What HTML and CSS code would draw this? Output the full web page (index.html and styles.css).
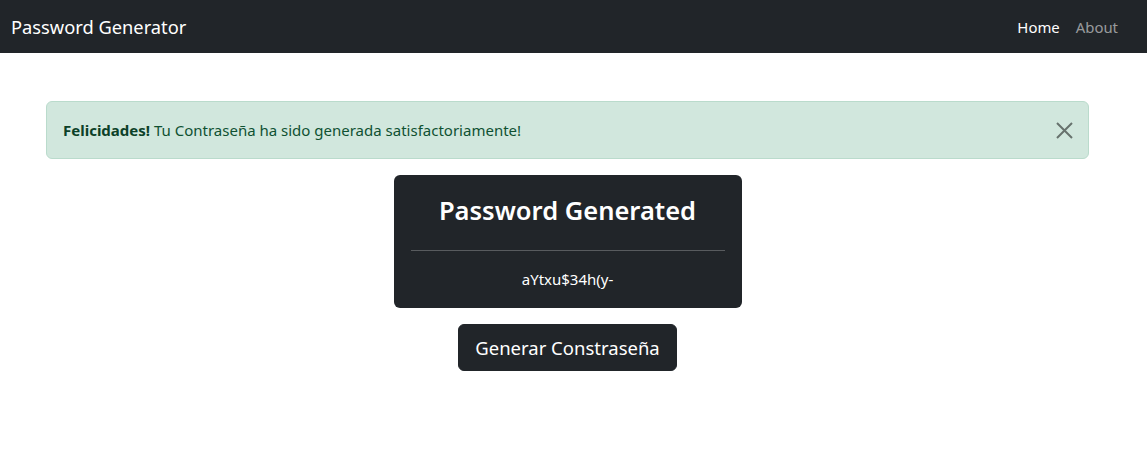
FILE: index.html
```html
<!DOCTYPE html>
<html lang="es">
<head>
<meta charset="utf-8">
<title>Password Generator</title>
<link rel="stylesheet" href="styles.css">
</head>
<body>
<nav class="navbar">
  <a class="brand" href="#">Password Generator</a>
  <ul class="nav">
    <li><a class="nav-link active" href="#">Home</a></li>
    <li><a class="nav-link" href="#">About</a></li>
  </ul>
</nav>
<main class="main">
  <div class="alert">
    <span><strong>Felicidades!</strong> Tu Contraseña ha sido generada satisfactoriamente!</span>
    <button class="btn-close" type="button" aria-label="Close">
      <svg width="17" height="17" viewBox="0 0 17 17"><path d="M1 1 L16 16 M16 1 L1 16" stroke="#000" stroke-width="2" fill="none"/></svg>
    </button>
  </div>
  <div class="card">
    <h2 class="card-title">Password Generated</h2>
    <hr class="divider">
    <p class="password">aYtxu$34h(y-</p>
  </div>
  <button class="btn-generate" type="button">Generar Constraseña</button>
</main>
</body>
</html>
```
FILE: styles.css
```css
* { box-sizing: border-box; }
html, body { margin: 0; padding: 0; }
body {
  font-family: "Noto Sans", "Open Sans", sans-serif;
  font-size: 15px;
  line-height: 24px;
  color: #212529;
  background: #fff;
}
.navbar {
  background: #212529;
  height: 53px;
  display: flex;
  align-items: center;
  justify-content: space-between;
  padding: 0 21px 0 11px;
}
.brand {
  color: #fff;
  text-decoration: none;
  font-size: 18.3px;
  line-height: 30px;
}
.nav {
  list-style: none;
  margin: 0;
  padding: 0;
  display: flex;
}
.nav-link {
  display: block;
  padding: 8px 8px;
  color: rgba(255,255,255,.55);
  text-decoration: none;
  font-size: 14.9px;
  line-height: 24px;
}
.nav-link.active { color: #fff; }
.main {
  margin: 48px 58px 0 46px;
  display: flex;
  flex-direction: column;
  align-items: center;
}
.alert {
  align-self: stretch;
  display: flex;
  align-items: center;
  justify-content: space-between;
  background: #d1e7dd;
  border: 1px solid #badbcc;
  color: #0f5132;
  border-radius: 6px;
  padding: 16px 15px 16px 16px;
  height: 58px;
  margin-bottom: 16px;
  font-size: 15px;
}
.alert strong { font-weight: 700; color: #0c4128; }
.btn-close {
  background: none;
  border: 0;
  padding: 0;
  opacity: .5;
  width: 17px;
  height: 17px;
  display: flex;
  cursor: pointer;
}
.card {
  width: 348px;
  background: #212529;
  color: #fff;
  border-radius: 6px;
  padding: 16px 17px 17px;
  text-align: center;
}
.card-title {
  margin: 0;
  font-size: 25.5px;
  line-height: 38px;
  font-weight: 600;
}
.divider {
  border: 0;
  border-top: 1px solid rgba(255,255,255,.25);
  margin: 21px 0 16px;
}
.password {
  margin: 0;
  font-size: 15px;
  line-height: 24px;
}
.btn-generate {
  margin-top: 16px;
  background: #212529;
  color: #fff;
  border: 1px solid #212529;
  border-radius: 6px;
  font-family: inherit;
  font-size: 18.5px;
  line-height: 30px;
  padding: 8px 16px;
  height: 47px;
}
```
